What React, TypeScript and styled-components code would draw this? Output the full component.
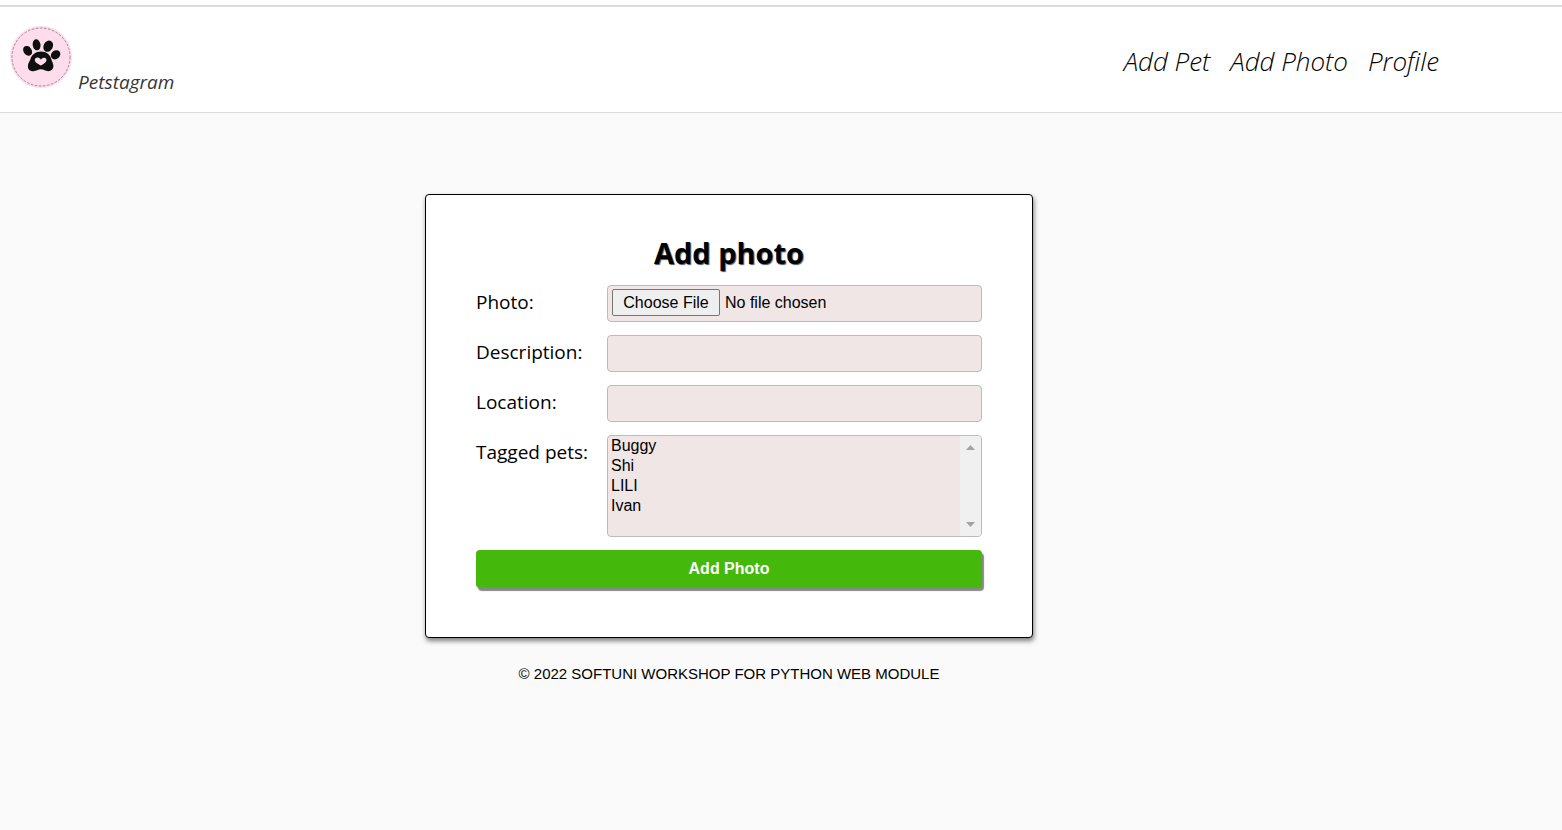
import React from "react";
import styled, { createGlobalStyle } from "styled-components";

const humanist = '"Open Sans", "Noto Sans", sans-serif';
const grotesque = '"Liberation Sans", Arial, sans-serif';

const GlobalStyle = createGlobalStyle`
  *, *::before, *::after { box-sizing: border-box; }
  body { margin: 0; background: #fafafa; color: #000; font-family: ${humanist}; }
`;

const Page = styled.div`
  min-height: 100vh;
  padding-top: 5px;
  background: linear-gradient(#fff 5px, #fafafa 5px);
`;

const Header = styled.header`
  display: flex;
  justify-content: space-between;
  height: 108px;
  padding: 0 123px 0 10px;
  border-top: 2px solid #dbdbdb;
  border-bottom: 1px solid #dbdbdb;
  background: #fff;
`;

const Brand = styled.a`
  display: flex;
  align-items: flex-end;
  gap: 6px;
  padding-bottom: 16px;
  color: #363636;
  font-size: 19px;
  font-style: italic;
  line-height: 28px;
  text-decoration: none;
`;

const Logo = styled.svg`
  width: 62px;
  height: 62px;
  margin-bottom: 8px;
`;

const Nav = styled.nav`
  display: flex;
  gap: 20px;
  padding-top: 35px;
`;

const NavLink = styled.a`
  color: #000;
  font-size: 26px;
  font-style: italic;
  font-weight: 300;
  line-height: 38px;
  text-decoration: none;
`;

const Main = styled.main`
  display: flex;
  flex-direction: column;
  align-items: center;
  padding: 81px 104px 0 0;
`;

const Form = styled.form`
  display: grid;
  grid-template-columns: 1fr 375px;
  row-gap: 13px;
  width: 100%;
  max-width: 608px;
  padding: 39px 50px 49px;
  border: 1px solid #000;
  border-radius: 4px;
  background: #fff;
  box-shadow: 1px 3px 5px rgba(0, 0, 0, 0.5);
`;

const Title = styled.h1`
  grid-column: 1 / -1;
  margin: 0;
  font-size: 29px;
  font-weight: 700;
  line-height: 38px;
  text-align: center;
  text-shadow: 1px 1px 1px #456;
`;

const Label = styled.label`
  font-size: 19px;
  line-height: 34px;
`;

const Input = styled.input`
  width: 100%;
  height: 37px;
  padding: 3px 4px;
  border: 1px solid #bbb;
  border-radius: 4px;
  background: #f0e6e5;
  color: #000;
  font-family: ${grotesque};
  font-size: 16px;

  &::file-selector-button {
    width: 108px;
    height: 27px;
    padding: 0;
    border: 1px solid #767676;
    border-radius: 2px;
    background: #efefef;
    color: #000;
    font-family: ${grotesque};
    font-size: 16px;
    margin-right: 5px;
  }
`;

const ListBox = styled.div`
  display: flex;
  height: 102px;
  overflow: hidden;
  border: 1px solid #bbb;
  border-radius: 4px;
  background: #f0e6e5;
`;

const PetSelect = styled.select`
  flex: 1;
  padding: 1px 0 0;
  overflow: hidden;
  border: 0;
  outline: 0;
  background: transparent;
  color: #000;
  font-family: ${grotesque};
  font-size: 16px;

  option {
    min-height: 20px;
    padding: 0 3px;
    line-height: 20px;
  }
`;

const ScrollTrack = styled.div`
  display: flex;
  flex-direction: column;
  justify-content: space-between;
  align-items: center;
  width: 21px;
  padding: 9px 0;
  background: #f0f0f0;
`;

const Arrow = styled.svg`
  width: 9px;
  height: 5px;
  fill: #a3a3a3;
`;

const Submit = styled.button`
  grid-column: 1 / -1;
  height: 38px;
  padding: 0;
  border: 0;
  border-radius: 4px;
  background: #44b90b;
  box-shadow: 2px 3px 1px #888;
  color: #fff;
  font-family: ${grotesque};
  font-size: 16px;
  font-weight: 700;
`;

const Footer = styled.footer`
  padding: 26px 0;
  font-family: ${grotesque};
  font-size: 15px;
  line-height: 20px;
  text-transform: uppercase;
`;

const PawLogo = () => (
  <Logo viewBox="0 0 62 62" aria-hidden="true">
    <circle cx="31" cy="31" r="31" fill="#fddcec" />
    <circle cx="31" cy="31" r="29" fill="none" stroke="#a08c97" strokeWidth="1" strokeDasharray="2.6 1.5" />
    <g fill="#0f0f0f">
      <ellipse cx="17.6" cy="24.8" rx="4" ry="5.3" transform="rotate(-36 17.6 24.8)" />
      <ellipse cx="26.6" cy="18.8" rx="3.9" ry="5.6" transform="rotate(-10 26.6 18.8)" />
      <ellipse cx="38.2" cy="20.2" rx="4.6" ry="5.9" transform="rotate(27 38.2 20.2)" />
      <ellipse cx="45.6" cy="28.8" rx="4.2" ry="5.1" transform="rotate(50 45.6 28.8)" />
      <path d="M31 25.4c5.6 0 9.3 3.5 10.4 8 .5 2.1 2 3.7 2 6.6 0 3.1-2.1 5.2-5.2 5.2-2.9 0-4.3-1.9-7.2-1.9s-4.6 1.9-7.7 1.9c-3.6 0-5.7-2.1-5.4-5.5.2-2.9 1.9-4.4 2.5-6.5 1.4-4.7 5.2-7.8 10.600-7.8z" />
    </g>
    <path d="M30.8 39.6c-2.6-1.5-6-3.1-6-5.5 0-1.7 1.3-2.7 2.8-2.5 1.5.1 2.6.9 3.3 2.2.6-1.3 1.7-2.1 3.1-2.1 1.7.1 2.7 1.3 2.5 2.8-.4 2.2-3.2 3.7-5.7 5.1z" fill="#fddcec" />
  </Logo>
);

const pets = ["Buggy", "Shi", "LILI", "Ivan"];
const links = ["Add Pet", "Add Photo", "Profile"];

export default function App() {
  return (
    <>
      <GlobalStyle />
      <Page>
        <Header>
          <Brand href="#home">
            <PawLogo />
            Petstagram
          </Brand>
          <Nav>
            {links.map((text) => (
              <NavLink key={text} href="#nav">{text}</NavLink>
            ))}
          </Nav>
        </Header>
        <Main>
          <Form onSubmit={(e) => e.preventDefault()}>
            <Title>Add photo</Title>
            <Label htmlFor="photo">Photo:</Label>
            <Input id="photo" type="file" />
            <Label htmlFor="description">Description:</Label>
            <Input id="description" type="text" />
            <Label htmlFor="location">Location:</Label>
            <Input id="location" type="text" />
            <Label htmlFor="pets">Tagged pets:</Label>
            <ListBox>
              <PetSelect id="pets" multiple size={5}>
                {pets.map((pet) => (
                  <option key={pet}>{pet}</option>
                ))}
              </PetSelect>
              <ScrollTrack aria-hidden="true">
                <Arrow viewBox="0 0 9 5"><path d="M0 5 4.5 0 9 5z" /></Arrow>
                <Arrow viewBox="0 0 9 5"><path d="M0 0h9L4.5 5z" /></Arrow>
              </ScrollTrack>
            </ListBox>
            <Submit type="submit">Add Photo</Submit>
          </Form>
          <Footer>© 2022 SoftUni Workshop for Python Web Module</Footer>
        </Main>
      </Page>
    </>
  );
}
